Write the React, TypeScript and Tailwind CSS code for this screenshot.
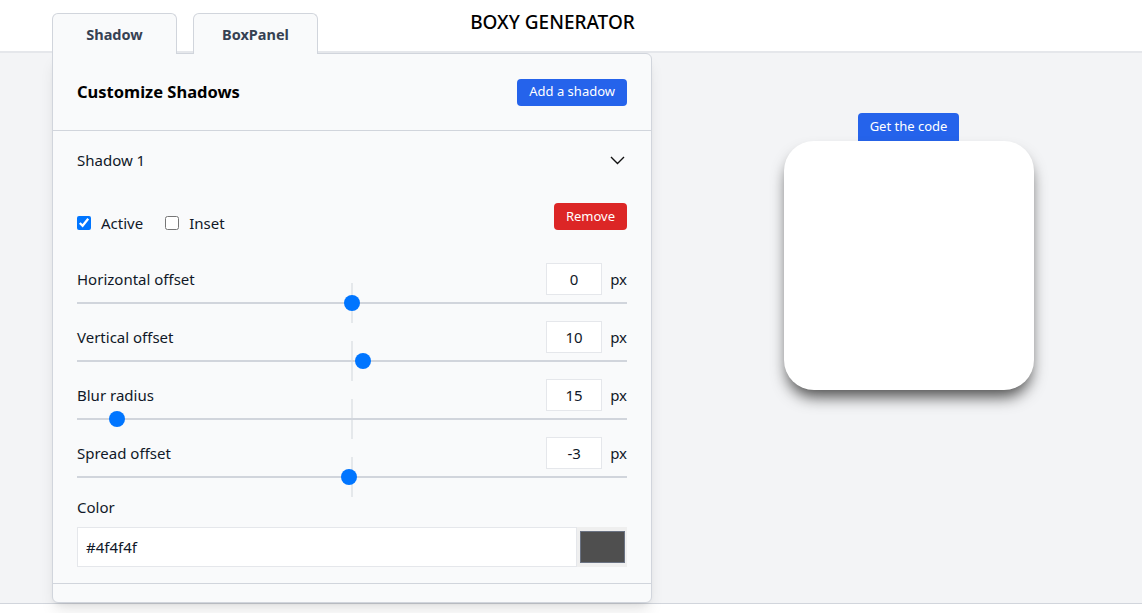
import { useState } from "react";

type SliderRow = {
  label: string;
  value: number;
  min: number;
  max: number;
};

const sliders: SliderRow[] = [
  { label: "Horizontal offset", value: 0, min: -250, max: 250 },
  { label: "Vertical offset", value: 10, min: -250, max: 250 },
  { label: "Blur radius", value: 15, min: 0, max: 250 },
  { label: "Spread offset", value: -3, min: -250, max: 250 },
];

function Slider({ value, min, max }: { value: number; min: number; max: number }) {
  const pct = (value - min) / (max - min);
  return (
    <div className="relative h-4">
      <div className="absolute top-[7px] right-0 left-0 h-[2px] bg-gray-300" />
      <div className="absolute top-[-12px] left-1/2 h-10 w-px -translate-x-1/2 bg-gray-300" />
      <div
        className="absolute top-0 h-4 w-4 rounded-full bg-[#0075ff]"
        style={{ left: `calc(${pct} * (100% - 16px))` }}
      />
    </div>
  );
}

function Tabs() {
  return (
    <div className="relative z-10 -mb-px flex gap-4">
      {["Shadow", "BoxPanel"].map((t) => (
        <div
          key={t}
          className="flex h-[41px] w-[125px] items-center justify-center rounded-t-md border-x border-t border-gray-300 bg-gray-50 pt-px text-[14.5px] font-bold text-gray-700"
        >
          {t}
        </div>
      ))}
    </div>
  );
}

export default function App() {
  const [active, setActive] = useState(true);
  const [inset, setInset] = useState(false);

  return (
    <div className="min-h-screen bg-white font-['Noto_Sans',sans-serif] text-gray-900">
      <header className="h-[53px] border-b-2 border-gray-200 bg-white">
        <h1 className="pt-[8px] pr-[37px] text-center text-[19px] font-medium text-black">
          BOXY GENERATOR
        </h1>
      </header>

      <main className="flex h-[551px] border-b border-gray-300 bg-gray-100">
        <div className="relative -mt-[40px] ml-[52px] w-[600px]">
          <Tabs />
          <section className="rounded-b-md rounded-tr-md border border-gray-300 bg-gray-50 shadow-lg">
            <div className="flex h-[77px] items-center justify-between border-b border-gray-300 px-6">
              <h2 className="text-[16.5px] font-bold text-black">Customize Shadows</h2>
              <button
                type="button"
                className="h-[27px] rounded bg-[#2563eb] px-3 text-[13px] text-white"
              >
                Add a shadow
              </button>
            </div>

            <div className="border-b border-gray-300 px-6 pb-4">
              <div className="flex h-[58px] items-center justify-between">
                <span className="text-[15px]">Shadow 1</span>
                <svg width="15" height="9" viewBox="0 0 15 9" className="mr-[2px]">
                  <polyline
                    points="1,1 7.5,7.5 14,1"
                    fill="none"
                    stroke="#111"
                    strokeWidth="1.4"
                  />
                </svg>
              </div>

              <div className="mt-[14px] flex h-[27px] items-end justify-between">
                <div className="-mb-[4px] flex items-center gap-[22px] text-[15px]">
                  <label className="flex items-center gap-[10px]">
                    <input
                      type="checkbox"
                      checked={active}
                      onChange={() => setActive(!active)}
                      className="m-0 h-[14px] w-[14px]"
                    />
                    Active
                  </label>
                  <label className="flex items-center gap-[10px]">
                    <input
                      type="checkbox"
                      checked={inset}
                      onChange={() => setInset(!inset)}
                      className="m-0 h-[14px] w-[14px]"
                    />
                    Inset
                  </label>
                </div>
                <button
                  type="button"
                  className="h-[27px] rounded bg-[#dc2626] px-3 text-[13px] text-white"
                >
                  Remove
                </button>
              </div>

              <div className="mt-[33px] flex flex-col gap-[10px]">
                {sliders.map((s) => (
                  <div key={s.label}>
                    <div className="flex h-8 items-center justify-between">
                      <span className="pt-px text-[15px]">{s.label}</span>
                      <div className="flex items-center gap-2">
                        <input
                          readOnly
                          value={s.value}
                          className="h-8 w-[56px] border border-gray-200 bg-white text-center text-[15px] outline-none"
                        />
                        <span className="text-[15px]">px</span>
                      </div>
                    </div>
                    <Slider value={s.value} min={s.min} max={s.max} />
                  </div>
                ))}
              </div>

              <div className="mt-3 text-[15px] leading-5">Color</div>
              <div className="mt-[10px] flex h-10">
                <input
                  readOnly
                  value="#4f4f4f"
                  className="h-10 flex-1 border border-gray-200 bg-white px-2 text-[15px] outline-none"
                />
                <div className="flex h-10 w-[50px] items-center justify-center bg-[#efefef]">
                  <div className="h-[32px] w-[45px] border border-gray-500 bg-[#4f4f4f]" />
                </div>
              </div>
            </div>
            <div className="h-[18px]" />
          </section>
        </div>

        <div className="flex flex-1 flex-col items-center pt-[60px] pl-[23px]">
          <button
            type="button"
            className="h-[28px] rounded-t bg-[#2563eb] px-3 text-[13px] text-white"
          >
            Get the code
          </button>
          <div className="h-[249px] w-[250px] rounded-[30px] bg-white shadow-[0_10px_15px_-3px_#4f4f4f]" />
        </div>
      </main>
    </div>
  );
}
